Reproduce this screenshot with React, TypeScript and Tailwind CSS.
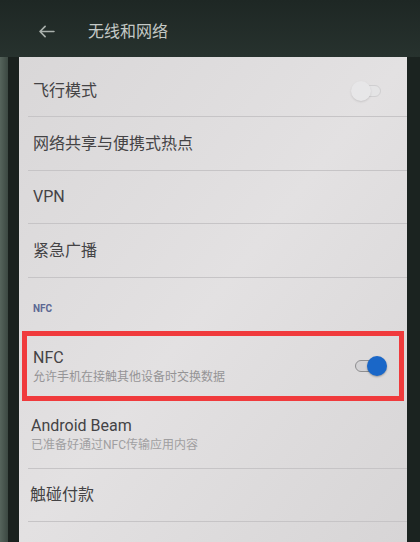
import React from 'react'

const font = { fontFamily: "Roboto, 'Noto Sans CJK SC', sans-serif" }

function Toggle({ on }: { on: boolean }) {
  if (on) {
    return (
      <div className="relative h-[20px] w-[32px] shrink-0">
        <div className="absolute left-0 top-[4px] h-[12px] w-[28px] rounded-full border-[1.5px] border-[#8e8e90] bg-[#d4d3d5]" />
        <div className="absolute right-0 top-0 h-[20px] w-[20px] rounded-full bg-[#1a67c8] shadow-[0_1px_2px_rgba(0,0,0,0.3)]" />
      </div>
    )
  }
  return (
    <div className="relative h-[20px] w-[30px] shrink-0 opacity-60">
      <div className="absolute right-0 top-[4px] h-[12px] w-[26px] rounded-full border border-[#c4c4c6] bg-[#e6e6e8]" />
      <div className="absolute left-0 top-0 h-[20px] w-[20px] rounded-full bg-[#ebebed] shadow-[0_1px_2px_rgba(0,0,0,0.2)]" />
    </div>
  )
}

function Row({ label, h, right }: { label: string; h: string; right?: React.ReactNode }) {
  return (
    <div className={`flex items-center justify-between pl-[14px] pr-[26px] ${h}`}>
      <span className="text-[16px] text-[#444345]">{label}</span>
      {right}
    </div>
  )
}

function Divider() {
  return <div className="ml-[9px] h-px bg-[#c6c4c6]" />
}

export default function App() {
  return (
    <div className="flex h-[542px] w-[420px] flex-col overflow-hidden bg-[#222c29]" style={font}>
      {/* title bar */}
      <div className="flex h-[57px] shrink-0 items-center bg-gradient-to-b from-[#1e2724] to-[#27322e] pl-[38px] pt-[6px]">
        <svg width="17" height="13" viewBox="0 0 18 14" fill="none" stroke="#a9b0ac" strokeWidth="1.8" strokeLinecap="round" strokeLinejoin="round">
          <path d="M17 7H2M7.5 1.5L2 7l5.5 5.5" />
        </svg>
        <span className="ml-[33px] text-[16px] text-[#c4c9c6]">无线和网络</span>
      </div>

      <div className="flex flex-1">
        {/* left bezel */}
        <div className="flex w-[19px] shrink-0">
          <div className="w-[8px] bg-gradient-to-r from-[#56645c] to-[#3c4842]" />
          <div className="flex-1 bg-[#1a211e]" />
        </div>

        {/* settings panel */}
        <div className="flex flex-1 flex-col bg-gradient-to-br from-[#d9d7d8] via-[#e3e1e2] to-[#d7d5d6]">
          <Row label="飞行模式" h="h-[59px] pt-[8px]" right={<Toggle on={false} />} />
          <Divider />
          <Row label="网络共享与便携式热点" h="h-[53px]" />
          <Divider />
          <Row label="VPN" h="h-[52px]" />
          <Divider />
          <Row label="紧急广播" h="h-[53px]" />
          <Divider />
          <div className="flex h-[53px] items-center pl-[14px] pt-[8px]">
            <span className="text-[10px] font-bold text-[#5b6894]">NFC</span>
          </div>

          {/* highlighted NFC row */}
          <div className="mx-[3px] flex h-[70px] items-center justify-between border-[5px] border-[#f03a3c] pl-[6px] pr-[12px]">
            <div className="flex flex-col">
              <span className="text-[16px] leading-[20px] text-[#444345]">NFC</span>
              <span className="mt-[1px] text-[12px] leading-[16px] text-[#959496]">允许手机在接触其他设备时交换数据</span>
            </div>
            <Toggle on />
          </div>

          <div className="flex h-[67px] flex-col justify-center pl-[12px]">
            <span className="text-[16px] leading-[20px] text-[#444345]">Android Beam</span>
            <span className="mt-[1px] text-[12px] leading-[16px] text-[#a09fa1]">已准备好通过NFC传输应用内容</span>
          </div>
          <Divider />
          <Row label="触碰付款" h="h-[52px] !pl-[11px]" />
          <Divider />
          <div className="flex-1" />
        </div>

        {/* right bezel */}
        <div className="w-[13px] shrink-0 bg-[#1b2320]" />
      </div>
    </div>
  )
}
